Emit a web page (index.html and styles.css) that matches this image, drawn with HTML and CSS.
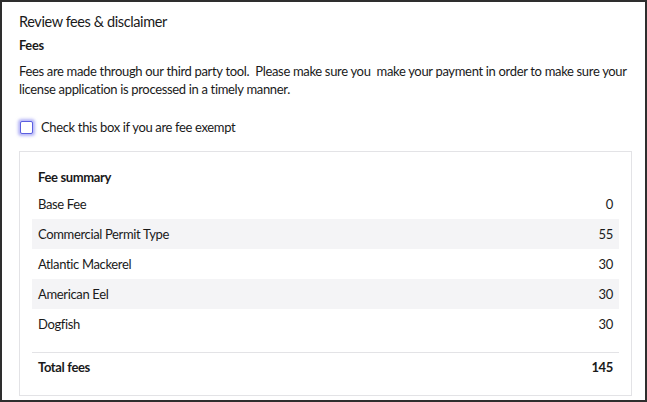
FILE: index.html
```html
<!DOCTYPE html>
<html>
<head>
<meta charset="utf-8">
<link rel="stylesheet" href="styles.css">
</head>
<body>
<div class="frame">
  <h1 class="title">Review fees &amp; disclaimer</h1>
  <h2 class="subtitle">Fees</h2>
  <p class="desc">Fees are made through our third party tool.&nbsp; Please make sure you&nbsp; make your payment in order to make sure your license application is processed in a timely manner.</p>
  <label class="check">
    <span class="box"></span>
    <span>Check this box if you are fee exempt</span>
  </label>
  <div class="card">
    <div class="card-title">Fee summary</div>
    <div class="row"><span>Base Fee</span><span>0</span></div>
    <div class="row alt"><span>Commercial Permit Type</span><span>55</span></div>
    <div class="row"><span>Atlantic Mackerel</span><span>30</span></div>
    <div class="row alt"><span>American Eel</span><span>30</span></div>
    <div class="row"><span>Dogfish</span><span>30</span></div>
    <div class="row total"><span>Total fees</span><span>145</span></div>
  </div>
</div>
</body>
</html>
```
FILE: styles.css
```css
html, body {
  margin: 0;
  padding: 0;
  background: #fff;
}
body {
  font-family: Lato, "Liberation Sans", sans-serif;
  color: #1a1a1a;
}
.frame {
  width: 647px;
  height: 402px;
  box-sizing: border-box;
  border: 2px solid #2e2e2e;
  padding: 10px 13px 0 17px;
  overflow: hidden;
}
.title {
  margin: 0;
  font-size: 14.5px;
  font-weight: 400;
  line-height: 20px;
  letter-spacing: -0.4px;
}
.subtitle {
  margin: 4px 0 0;
  font-size: 12.8px;
  font-weight: 700;
  line-height: 18px;
  letter-spacing: -0.3px;
}
.desc {
  margin: 8px -6px 0 0;
  font-size: 13px;
  line-height: 18px;
  letter-spacing: -0.33px;
}
.check {
  display: flex;
  align-items: center;
  gap: 8px;
  margin-top: 20px;
  font-size: 13px;
  line-height: 18px;
  padding-left: 1px;
  letter-spacing: -0.35px;
}
.box {
  width: 11px;
  height: 11px;
  border: 1.5px solid #5a5ee0;
  border-radius: 2px;
  box-shadow: 0 0 3px 1.5px rgba(110, 110, 240, 0.5);
  background: #fff;
}
.card {
  margin-top: 15px;
  border: 1px solid #e3e3e6;
  padding: 14px 12px 14px;
}
.card-title {
  font-size: 13px;
  font-weight: 700;
  line-height: 18px;
  padding: 2px 6px 3px;
  letter-spacing: -0.35px;
}
.row {
  display: flex;
  justify-content: space-between;
  height: 30px;
  align-items: center;
  padding: 0 6px;
  font-size: 13px;
  letter-spacing: -0.35px;
}
.alt {
  background: #f4f4f6;
}
.total {
  margin-top: 13px;
  border-top: 1px solid #e3e3e6;
  font-weight: 700;
  height: 28px;
  box-sizing: content-box;
}
```
